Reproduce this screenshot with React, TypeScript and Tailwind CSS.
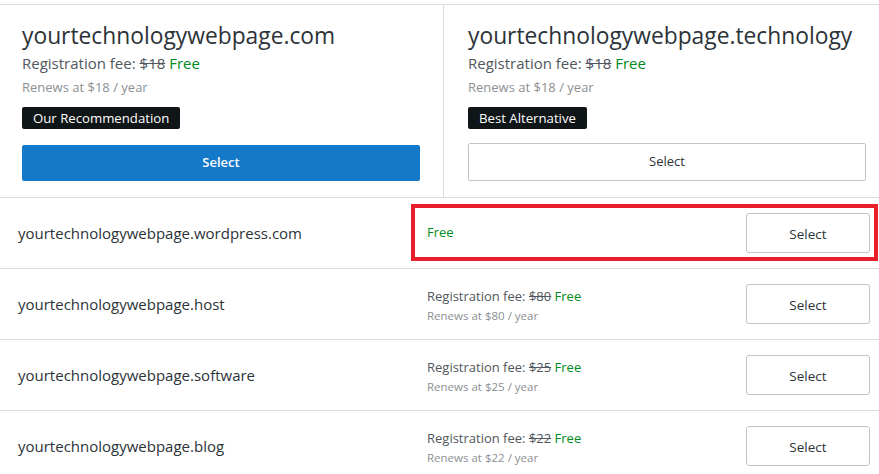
import React from "react";

// Domain picker: two featured suggestions on top, then a list of other
// extensions, each with its price info and a Select button.

type Featured = {
  name: string;
  was: string;
  renews: string;
  badge: string;
  primary: boolean;
};

type Row = {
  name: string;
  was?: string;
  renews?: string;
  highlighted?: boolean;
};

const featured: Featured[] = [
  { name: "yourtechnologywebpage.com", was: "$18", renews: "$18", badge: "Our Recommendation", primary: true },
  { name: "yourtechnologywebpage.technology", was: "$18", renews: "$18", badge: "Best Alternative", primary: false },
];

const rows: Row[] = [
  { name: "yourtechnologywebpage.wordpress.com", highlighted: true },
  { name: "yourtechnologywebpage.host", was: "$80", renews: "$80" },
  { name: "yourtechnologywebpage.software", was: "$25", renews: "$25" },
  { name: "yourtechnologywebpage.blog", was: "$22", renews: "$22" },
];

function FeaturedCard({ item, first }: { item: Featured; first: boolean }) {
  return (
    <div className={first ? "flex-1 pl-[22px] pr-[23px] pt-[16px] pb-[16px]" : "flex-1 border-l border-[#dcdcde] pl-[24px] pr-[13px] pt-[16px] pb-[16px]"}>
      <div className="text-[22.8px] leading-[30px] text-[#2c3338]">{item.name}</div>
      <div className="mt-[2px] text-[15px] leading-[20px] text-[#50575e]">
        Registration fee: <span className="line-through">{item.was}</span>{" "}
        <span className="text-[#008a20]">Free</span>
      </div>
      <div className="mt-[5px] text-[13px] leading-[18px] text-[#8c8f94]">Renews at {item.renews} / year</div>
      <div className="mt-[11px] inline-block rounded-[2px] bg-[#101517] px-[11px] text-[13.2px] leading-[22px] text-white">
        {item.badge}
      </div>
      <button
        className={
          item.primary
            ? "mt-[16px] flex h-[36px] w-full items-center justify-center rounded-[2px] bg-[#1479c9] text-[13px] font-semibold text-white"
            : "mt-[14px] flex h-[38px] w-full items-center justify-center rounded-[2px] border border-[#c3c4c7] bg-white text-[13px] text-[#2c3338]"
        }
      >
        Select
      </button>
    </div>
  );
}

function DomainRow({ row }: { row: Row }) {
  return (
    <div className="relative flex h-[71px] items-center border-b border-[#dcdcde] pl-[18px] pr-[9px]">
      <div className="flex-1 text-[15px] text-[#2c3338]">{row.name}</div>
      <div className="w-[319px]">
        {row.was ? (
          <div className="pt-[3px]">
            <div className="text-[13px] leading-[18px] text-[#50575e]">
              Registration fee: <span className="line-through">{row.was}</span>{" "}
              <span className="text-[#008a20]">Free</span>
            </div>
            <div className="mt-[3px] text-[11.5px] leading-[16px] text-[#8c8f94]">Renews at {row.renews} / year</div>
          </div>
        ) : (
          <div className="text-[13px] text-[#008a20]">Free</div>
        )}
      </div>
      <button className="flex h-[40px] w-[124px] items-center justify-center rounded-[3px] border border-[#c3c4c7] bg-white pt-[2px] text-[13.5px] text-[#2c3338]">
        Select
      </button>
      {row.highlighted ? (
        <div className="pointer-events-none absolute left-[411px] right-[1px] top-[6px] bottom-[7px] border-4 border-[#e81f2a]" />
      ) : null}
    </div>
  );
}

export default function App() {
  return (
    <div className="min-h-screen bg-white pt-[4px] font-['Open_Sans',sans-serif]">
      <div className="flex border-y border-[#dcdcde]">
        {featured.map((item, i) => (
          <FeaturedCard key={item.name} item={item} first={i === 0} />
        ))}
      </div>
      {rows.map((row) => (
        <DomainRow key={row.name} row={row} />
      ))}
    </div>
  );
}
